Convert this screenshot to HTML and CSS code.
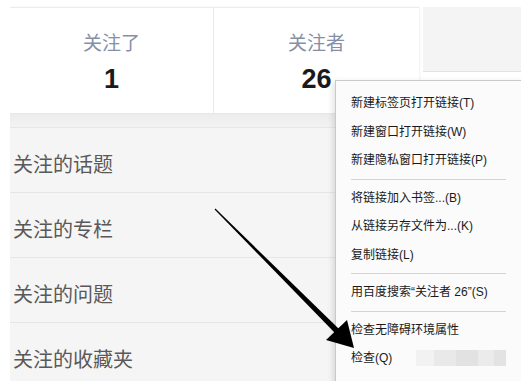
FILE: index.html
```html
<!DOCTYPE html>
<html lang="zh-CN">
<head>
  <meta charset="UTF-8">
  <meta name="viewport" content="width=device-width, initial-scale=1.0" />
  <title>关注</title>
  <link rel="stylesheet" href="styles.css">
</head>
<body>

  <div class="pagina">
    <div class="topo">
      <div class="estatisticas">
        <a class="stat" href="#">
          <div class="stat-rotulo">关注了</div>
          <strong class="stat-numero">1</strong>
        </a>
        <a class="stat" href="#">
          <div class="stat-rotulo">关注者</div>
          <strong class="stat-numero">26</strong>
        </a>
      </div>
      <div class="lateral"></div>
    </div>

    <div class="faixa"></div>

    <ul class="lista-seguidos">
      <li>关注的话题</li>
      <li>关注的专栏</li>
      <li>关注的问题</li>
      <li>关注的收藏夹</li>
    </ul>
  </div>

  <div class="menu-contexto">
    <div class="item">新建标签页打开链接(T)</div>
    <div class="item">新建窗口打开链接(W)</div>
    <div class="item">新建隐私窗口打开链接(P)</div>
    <div class="separador"></div>
    <div class="item">将链接加入书签...(B)</div>
    <div class="item">从链接另存文件为...(K)</div>
    <div class="item">复制链接(L)</div>
    <div class="separador"></div>
    <div class="item">用百度搜索“关注者 26”(S)</div>
    <div class="separador"></div>
    <div class="item">检查无障碍环境属性</div>
    <div class="item item-atalho">检查(Q)<span class="borrado"></span></div>
  </div>

  <svg class="seta" width="521" height="381" viewBox="0 0 521 381">
    <polygon points="215.4,208.6 342.1,331.9 337.9,336.1 214.6,209.4" fill="#000" />
    <polygon points="354,348 347,320 326,340" fill="#000" />
  </svg>

</body>
</html>
```

FILE: styles.css
```css
:root {
  --cor-rotulo: #8590a6;
  --cor-numero: #1a1a1a;
  --cor-lista: #595959;
  --cor-fundo-lista: #f5f5f5;
  --cor-linha: #e6e6e6;

  --fonte: 'Noto Sans CJK SC', 'Microsoft YaHei', sans-serif;
  --fonte-menu: 'Liberation Sans', 'Noto Sans CJK SC', sans-serif;
  --fonte-numero: 'Liberation Sans', Arial, sans-serif;
}

* {
  margin: 0;
  padding: 0;
  box-sizing: border-box;
}

body {
  font-family: var(--fonte);
  background-color: white;
  width: 521px;
  height: 381px;
  overflow: hidden;
  position: relative;
}

.pagina {
  padding: 7px 0 0 10px;
}

.topo {
  display: flex;
  align-items: flex-start;
  gap: 4px;
}

.estatisticas {
  width: 409px;
  height: 106px;
  display: grid;
  grid-template-columns: 203px 206px;
  background-color: white;
  border-top: 1px solid #ececec;
  box-shadow: 1px 0 2px rgba(0,0,0,0.06);
}

.stat {
  text-decoration: none;
  text-align: center;
  padding-top: 22px;
}

.stat + .stat {
  border-left: 1px solid #ebebeb;
}

.stat-rotulo {
  font-size: 19px;
  line-height: 24px;
  color: var(--cor-rotulo);
}

.stat-numero {
  display: block;
  margin-top: 10px;
  font-family: var(--fonte-numero);
  font-size: 27px;
  line-height: 30px;
  color: var(--cor-numero);
}

.lateral {
  flex: 1;
  height: 65px;
  background-color: #f4f4f4;
  border-bottom: 1px solid #e2e2e2;
}

.faixa {
  height: 15px;
  background: linear-gradient(#ececec, #f3f3f3);
  border-bottom: 1px solid var(--cor-linha);
}

.lista-seguidos {
  list-style: none;
  background-color: var(--cor-fundo-lista);
}

.lista-seguidos li {
  height: 65px;
  display: flex;
  align-items: center;
  padding: 6px 0 0 3px;
  font-size: 20px;
  color: var(--cor-lista);
  border-bottom: 1px solid var(--cor-linha);
}

.menu-contexto {
  position: absolute;
  left: 335px;
  top: 80px;
  width: 196px;
  height: 320px;
  padding: 8px 0;
  font-family: var(--fonte-menu);
  background-color: #fbfbfb;
  border: 1px solid #c9c9c9;
  box-shadow: -2px 2px 6px rgba(0,0,0,0.12);
}

.item {
  height: 28.5px;
  line-height: 28.5px;
  padding-left: 15px;
  font-size: 12px;
  color: #1a1a1a;
  white-space: nowrap;
}

.item-atalho {
  display: flex;
  align-items: center;
}

.borrado {
  width: 90px;
  height: 16px;
  margin: 0 24px 0 auto;
  background: linear-gradient(90deg, #f2f2f2 0, #f2f2f2 18px, #e9e9e9 18px, #e9e9e9 40px, #e2e2e2 40px, #e2e2e2 62px, #ebebeb 62px, #ebebeb 78px, #e3e3e3 78px);
}

.separador {
  height: 1px;
  margin: 4px 24px 4px 15px;
  background-color: #d4d4d4;
}

.seta {
  position: absolute;
  left: 0;
  top: 0;
  pointer-events: none;
}
```
